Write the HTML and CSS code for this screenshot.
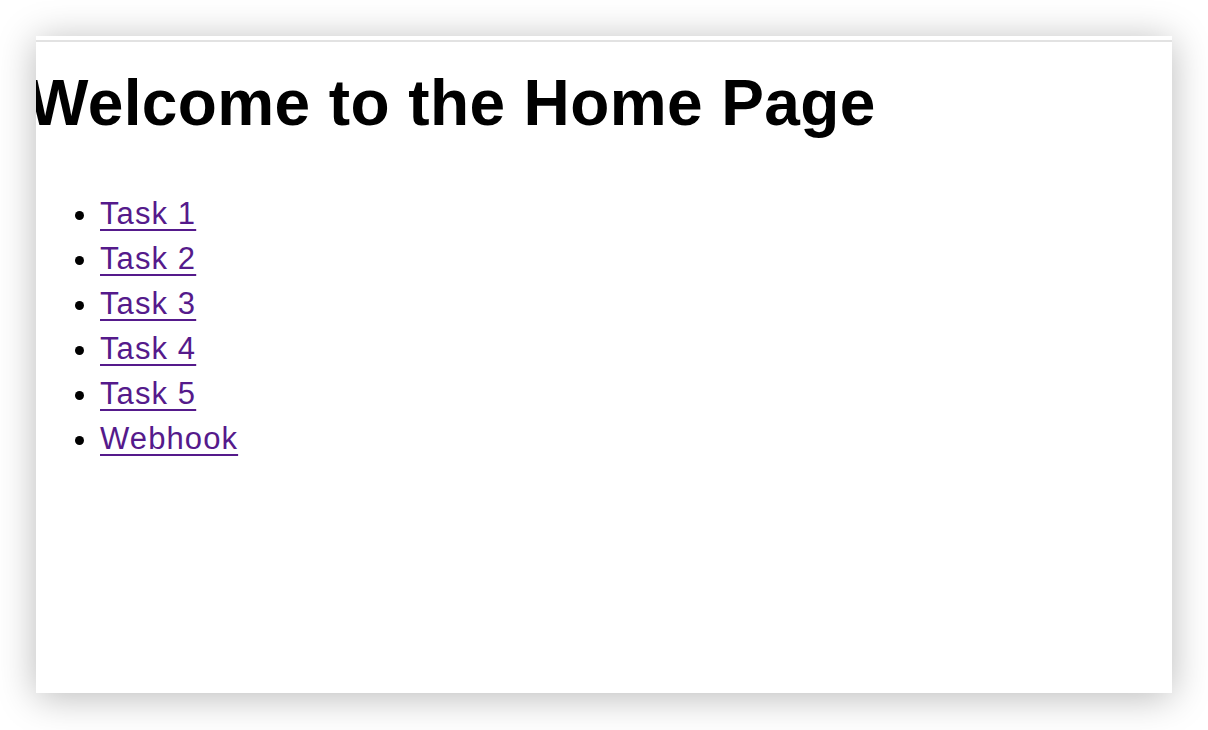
FILE: index.html
```html
<!DOCTYPE html>
<html>
<head>
<meta charset="utf-8">
<link rel="stylesheet" href="styles.css">
</head>
<body>
<div class="window">
  <div class="topline"></div>
  <h1 class="title">Welcome to the Home Page</h1>
  <ul class="tasks">
    <li><a href="#">Task 1</a></li>
    <li><a href="#">Task 2</a></li>
    <li><a href="#">Task 3</a></li>
    <li><a href="#">Task 4</a></li>
    <li><a href="#">Task 5</a></li>
    <li><a href="#">Webhook</a></li>
  </ul>
</div>
</body>
</html>
```
FILE: styles.css
```css
html, body {
  margin: 0;
  padding: 0;
  background: #ffffff;
}
body {
  padding: 36px 36px 0 36px;
  height: 730px;
  box-sizing: border-box;
  overflow: hidden;
}
.window {
  width: 1136px;
  height: 657px;
  background: #ffffff;
  box-shadow: 0 4px 36px rgba(0, 0, 0, 0.28);
  overflow: hidden;
  font-family: "Liberation Sans", Arial, sans-serif;
  color: #000;
}
.topline {
  height: 2px;
  margin-top: 4px;
  background: #e2e2e2;
}
.title {
  margin: 24px 0 0 -8px;
  font-size: 64px;
  font-weight: bold;
  line-height: 74px;
  letter-spacing: 0.4px;
  white-space: nowrap;
}
.tasks {
  margin: 51px 0 0 0;
  padding-left: 64px;
  font-size: 31px;
  line-height: 45px;
}
.tasks a {
  color: #551a8b;
  letter-spacing: 1.1px;
  text-decoration: underline;
  text-decoration-thickness: 2px;
  text-underline-offset: 5px;
}
```
